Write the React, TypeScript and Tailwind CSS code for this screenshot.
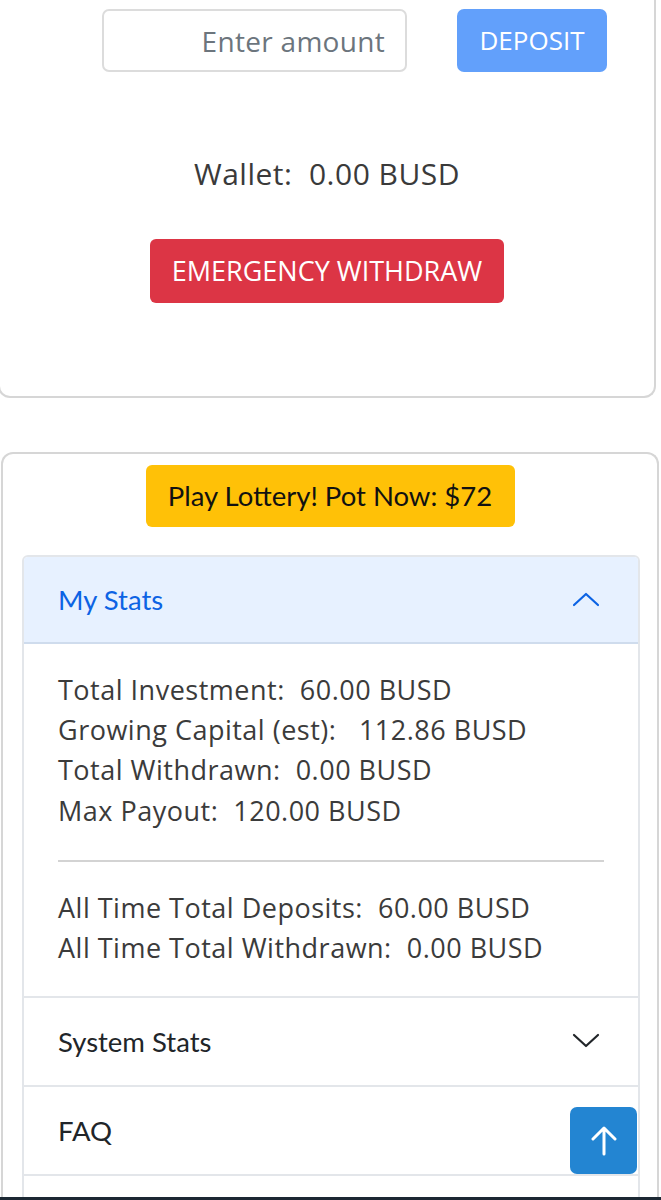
import { ReactNode } from 'react';

const poppins = { fontFamily: '"Open Sans", "Noto Sans", sans-serif' };
const nunito = { fontFamily: 'Lato, "Noto Sans", sans-serif' };

function Chevron({ up, color }: { up?: boolean; color: string }) {
  return (
    <svg width="28" height="16" viewBox="0 0 28 16" fill="none">
      <polyline
        points={up ? '2,14 14,3 26,14' : '2,2 14,13 26,2'}
        stroke={color}
        strokeWidth="2.2"
        strokeLinecap="round"
        strokeLinejoin="round"
      />
    </svg>
  );
}

function Item({ title, open, children }: { title: string; open?: boolean; children?: ReactNode }) {
  return (
    <div className="border-t-2 border-[#e3e6ea] first:border-t-0">
      <div
        className={`flex items-center justify-between h-[87px] pl-[34px] pr-[38px] text-[27.5px] ${
          open ? 'bg-[#e7f1ff] text-[#0c63e4] border-b-2 border-[#cfdced]' : 'bg-white text-[#212529]'
        }`}
        style={nunito}
      >
        <span>{title}</span>
        {title !== 'FAQ' && <Chevron up={open} color={open ? '#0c63e4' : '#212529'} />}
      </div>
      {children}
    </div>
  );
}

export default function App() {
  return (
    <div className="relative w-[661px] h-[1200px] overflow-hidden bg-white">
      {/* wallet card */}
      <div className="ml-[-2px] w-[658px] h-[398px] border-2 border-t-0 border-[#d6d6d6] rounded-b-[12px] flex flex-col items-center" style={poppins}>
        <div className="flex gap-[50px] pt-[9px] pl-[102px] self-start">
          <input
            placeholder="Enter amount"
            className="w-[305px] h-[63px] border-2 border-[#dcdcdc] rounded-[7px] text-right pr-[20px] text-[28px] tracking-[0.3px] placeholder:text-[#6c757d] outline-none"
            style={poppins}
          />
          <button className="w-[150px] h-[63px] rounded-[7px] bg-[#62a0fb] text-white text-[26px]">DEPOSIT</button>
        </div>
        <p className="mt-[82px] text-[30px] tracking-[0.5px] text-[#3a3a3a] leading-[40px]">Wallet:&nbsp; 0.00 BUSD</p>
        <button className="mt-[45px] w-[354px] h-[64px] rounded-[6px] bg-[#dc3545] text-white text-[27px]">
          EMERGENCY WITHDRAW
        </button>
      </div>

      {/* stats card */}
      <div className="mt-[54px] ml-[1px] w-[658px] h-[800px] border-2 border-b-0 border-[#d6d6d6] rounded-t-[12px] flex flex-col items-center pt-[11px]">
        <button className="w-[369px] h-[63px] rounded-[6px] bg-[#ffc107] text-[#111] text-[27.5px]" style={nunito}>
          Play Lottery! Pot Now: $72
        </button>
        <div className="mt-[28px] self-start ml-[19px] w-[618px] border-2 border-[#e3e6ea] rounded-t-[6px] overflow-hidden">
          <Item title="My Stats" open>
            <div className="px-[34px] pt-[26px] pb-[27px] text-[27px] tracking-[0.5px] leading-[40.3px] text-[#3b3b3b]" style={poppins}>
              <p>Total Investment:&nbsp; 60.00 BUSD</p>
              <p>Growing Capital (est):&nbsp;&nbsp; 112.86 BUSD</p>
              <p>Total Withdrawn:&nbsp; 0.00 BUSD</p>
              <p>Max Payout:&nbsp; 120.00 BUSD</p>
              <hr className="mt-[29px] mb-[26px] border-t-2 border-[#d3d3d3]" />
              <p>All Time Total Deposits:&nbsp; 60.00 BUSD</p>
              <p>All Time Total Withdrawn:&nbsp; 0.00 BUSD</p>
            </div>
          </Item>
          <Item title="System Stats" />
          <Item title="FAQ" />
          <Item title="" />
        </div>
      </div>

      {/* scroll top */}
      <button className="absolute left-[570px] top-[1107px] w-[67px] h-[67px] rounded-[7px] bg-[#2385d2] flex items-center justify-center">
        <svg width="28" height="30" viewBox="0 0 28 30" fill="none">
          <path d="M14 28V3M3 13L14 2l11 11" stroke="white" strokeWidth="3" strokeLinecap="round" strokeLinejoin="round" />
        </svg>
      </button>

      <div className="absolute left-0 bottom-0 w-full h-[3px] bg-[#1c2833]" />
    </div>
  );
}
